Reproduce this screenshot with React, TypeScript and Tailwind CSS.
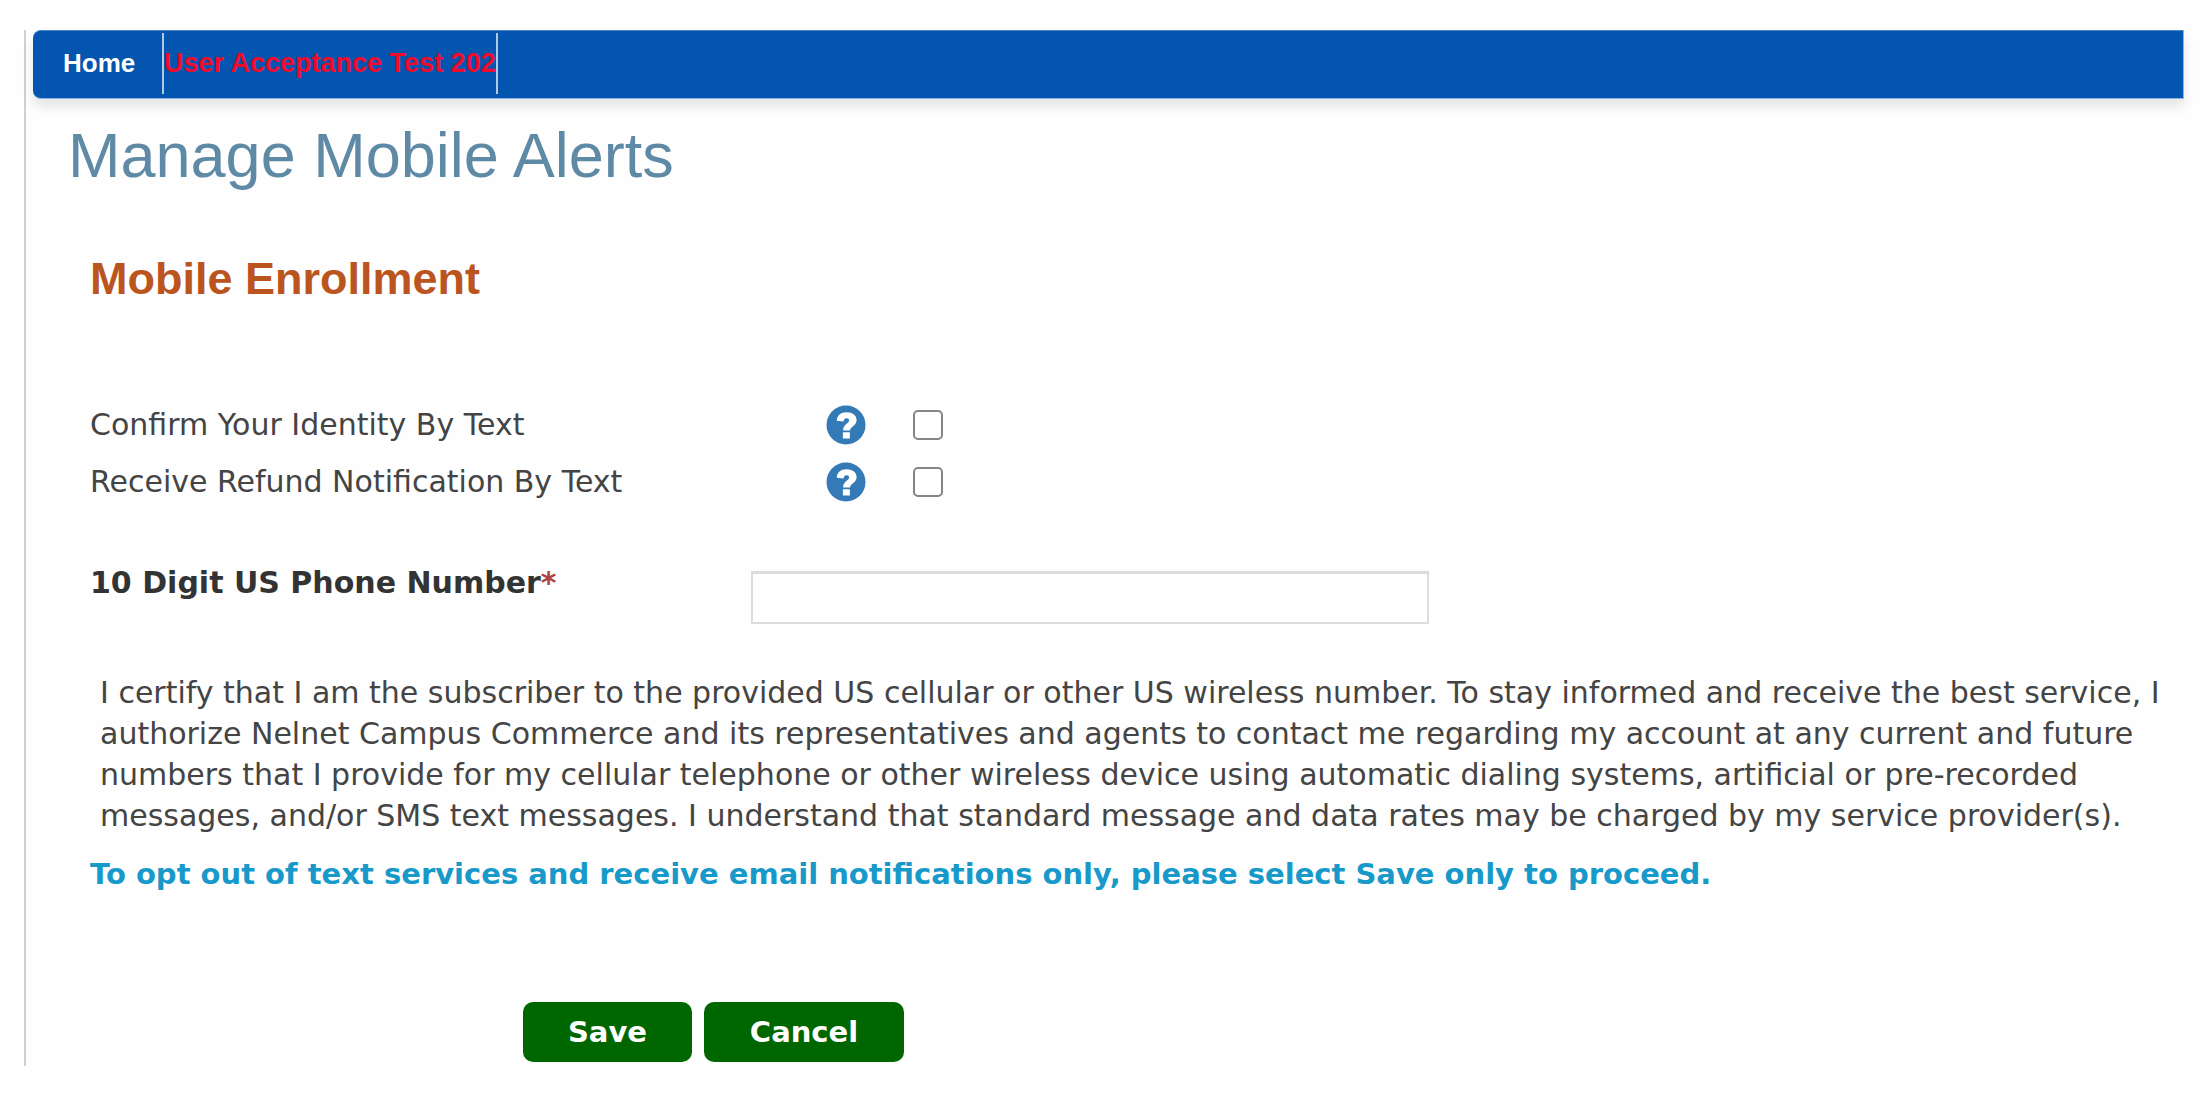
import { useState } from "react";

const options = [
  { id: "confirm-identity", label: "Confirm Your Identity By Text" },
  { id: "refund-notification", label: "Receive Refund Notification By Text" },
];

function HelpIcon() {
  return (
    <svg viewBox="0 0 40 40" className="size-10" aria-hidden="true">
      <circle cx="20" cy="20" r="19.5" fill="#337ab7" />
      <path
        d="M10.800 15.800C10.800 10.200 14.800 7.200 20.500 7.200c5.800 0 10.100 3 10.100 7.900 0 6-6.500 6.500-6.500 10.300h-7c0-6.200 6-7 6-9.900 0-1.500-1-2.300-2.500-2.300-1.800 0-2.800 1-3 3.200z"
        fill="#fff"
      />
      <rect x="16.900" y="27.200" width="7" height="6.400" rx="0.500" fill="#fff" />
    </svg>
  );
}

function NavBar() {
  return (
    <nav className="mr-4 ml-[7px] flex h-[69px] items-stretch rounded-l-lg border-y border-r border-[#8db4e2] border-t-[#4a86cc] bg-[#0455b0] pt-0.5 pb-1 font-['Liberation_Sans',Arial,sans-serif] font-bold shadow-[0_8px_12px_rgba(0,0,0,0.1)]">
      <a href="#home" className="flex w-[131px] items-center border-r-2 border-[#b4c8e0] pl-[30px] text-[26px] text-white">
        Home
      </a>
      <a href="#uat" className="flex w-[334px] items-center overflow-hidden border-r-2 border-[#b4c8e0] text-[27px] whitespace-nowrap text-[#f00a2c]">
        User Acceptance Test 202
      </a>
    </nav>
  );
}

export default function App() {
  const [phone, setPhone] = useState("");

  return (
    <div className="min-h-screen bg-[#fefefe] pt-[30px] pb-9 pl-6 font-['DejaVu_Sans',Verdana,sans-serif] text-[30px] leading-[41px] text-[#444]">
      <div className="border-l-2 border-[#d0d0d0] pb-1">
        <NavBar />
        <main className="px-10">
          <h1 className="mt-[18px] ml-0.5 font-['Liberation_Sans',Arial,sans-serif] text-[63px] leading-[76px] text-[#5f8aa6]">
            Manage Mobile Alerts
          </h1>
          <form className="px-6" onSubmit={(e) => e.preventDefault()}>
            <h2 className="mt-[59px] font-['Liberation_Sans',Arial,sans-serif] text-[45px] leading-[54px] font-bold text-[#bb5520]">
              Mobile Enrollment
            </h2>

            <div className="mt-[90px]">
              {options.map((option) => (
                <div key={option.id} className="flex h-[57px] items-center">
                  <label htmlFor={option.id} className="w-[736px]">
                    {option.label}
                  </label>
                  <button type="button" aria-label="Help">
                    <HelpIcon />
                  </button>
                  <input
                    id={option.id}
                    type="checkbox"
                    className="ml-[47px] size-[30px] appearance-none rounded-[5px] border-2 border-[#858585] bg-white checked:bg-[#337ab7]"
                  />
                </div>
              ))}
            </div>

            <div className="mt-[52px] flex items-start">
              <label htmlFor="phone" className="w-[661px] font-bold text-[#333]">
                10 Digit US Phone Number<span className="text-[#b04040]">*</span>
              </label>
              <input
                id="phone"
                type="tel"
                value={phone}
                onChange={(e) => setPhone(e.target.value)}
                className="mt-[9px] h-[53px] w-[678px] border-2 border-t-3 border-[#dcdcdc] bg-white px-3"
              />
            </div>

            <p className="mt-12 -mr-10 ml-[10px]">
              I certify that I am the subscriber to the provided US cellular or other US wireless number. To stay informed and receive the best service, I
              authorize Nelnet Campus Commerce and its representatives and agents to contact me regarding my account at any current and future
              numbers that I provide for my cellular telephone or other wireless device using automatic dialing systems, artificial or pre-recorded
              messages, and/or SMS text messages. I understand that standard message and data rates may be charged by my service provider(s).
            </p>
            <p className="mt-[18px] text-[29px] font-bold text-[#1799c9]">
              To opt out of text services and receive email notifications only, please select Save only to proceed.
            </p>

            <div className="mt-[107px] ml-[433px] flex gap-3 text-[29px] font-bold text-white">
              <button type="submit" className="h-[60px] w-[169px] rounded-[10px] bg-[#006600]">
                Save
              </button>
              <button type="button" className="h-[60px] w-[200px] rounded-[10px] bg-[#006600]">
                Cancel
              </button>
            </div>
          </form>
        </main>
      </div>
    </div>
  );
}
